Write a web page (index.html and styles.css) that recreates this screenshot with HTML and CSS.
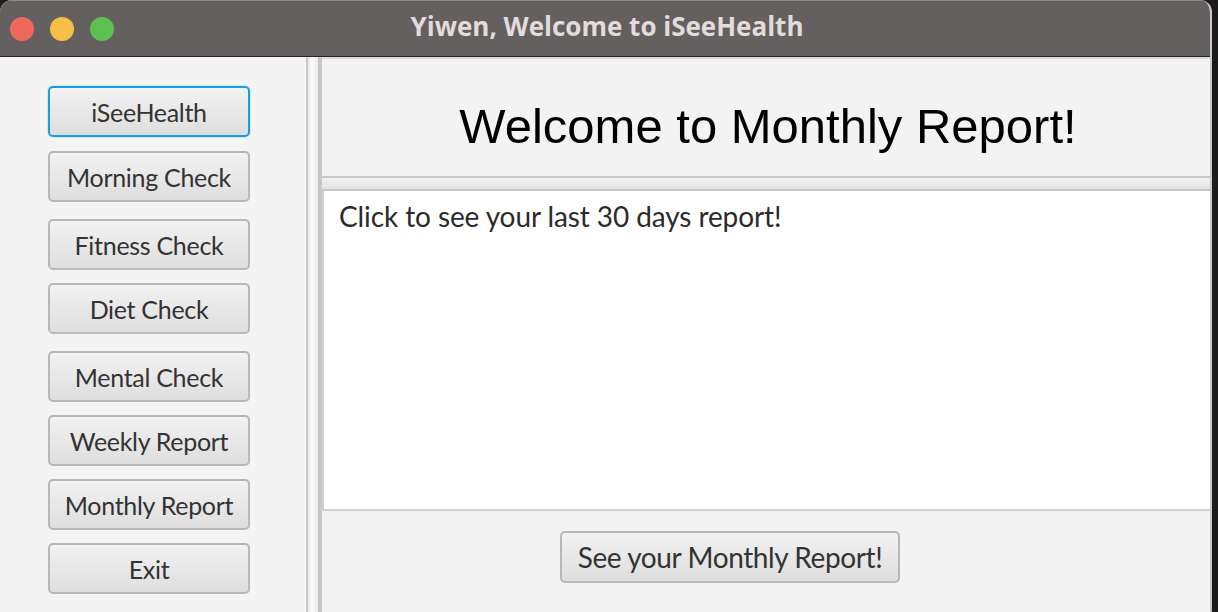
FILE: index.html
```html
<!DOCTYPE html>
<html>
<head>
<meta charset="utf-8">
<link rel="stylesheet" href="styles.css">
</head>
<body>
<div class="window">
  <div class="titlebar">
    <div class="lights">
      <span class="light red"></span>
      <span class="light yellow"></span>
      <span class="light green"></span>
    </div>
    <div class="title">Yiwen, Welcome to iSeeHealth</div>
  </div>
  <div class="content">
    <div class="sidebar">
      <button class="btn nav focused b1">iSeeHealth</button>
      <button class="btn nav b2">Morning Check</button>
      <button class="btn nav b3">Fitness Check</button>
      <button class="btn nav b4">Diet Check</button>
      <button class="btn nav b5">Mental Check</button>
      <button class="btn nav b6">Weekly Report</button>
      <button class="btn nav b7">Monthly Report</button>
      <button class="btn nav b8">Exit</button>
    </div>
    <div class="vsplit"></div>
    <div class="main">
      <div class="header">
        <h1 class="heading">Welcome to Monthly Report!</h1>
      </div>
      <div class="hsplit"></div>
      <div class="textarea">Click to see your last 30 days report!</div>
      <div class="footer">
        <button class="btn action">See your Monthly Report!</button>
      </div>
    </div>
  </div>
</div>
</body>
</html>
```

FILE: styles.css
```css
* { box-sizing: border-box; }
html, body { margin: 0; padding: 0; }
body {
  width: 1218px;
  height: 612px;
  background: #1c1c1c;
  overflow: hidden;
}
.window {
  width: 1212px;
  height: 622px;
  border-radius: 12px;
  overflow: hidden;
  background: #f4f4f4;
  display: flex;
  flex-direction: column;
  border-right: 2px solid #c9c9c9;
}
.titlebar {
  height: 57px;
  flex: none;
  background: #656060;
  border-top: 1px solid #8d8888;
  border-bottom: 1px solid #262424;
  display: flex;
  align-items: center;
  position: relative;
}
.lights {
  display: flex;
  gap: 16px;
  padding-left: 10px;
}
.light {
  width: 24px;
  height: 24px;
  border-radius: 50%;
  display: block;
}
.red { background: #f0685d; }
.yellow { background: #f6bd47; }
.green { background: #5cc052; }
.title {
  position: absolute;
  left: 0;
  right: 0;
  top: 9px;
  text-align: center;
  font-family: "Open Sans", "Liberation Sans", sans-serif;
  font-weight: 700;
  font-size: 26px;
  line-height: 32px;
  color: #e2dcdc;
  padding-left: 4px;
}
.content {
  flex: 1;
  display: flex;
}
.sidebar {
  width: 306px;
  flex: none;
  background: #f4f4f4;
  display: flex;
  flex-direction: column;
  align-items: flex-start;
  padding-left: 48px;
  padding-top: 29px;
}
.btn {
  font-family: Lato, "Open Sans", sans-serif;
  color: #333;
  border: 2px solid #b8b8b8;
  border-radius: 5px;
  background: linear-gradient(#f2f2f2, #dedede);
  padding: 0;
  margin: 0;
  cursor: default;
}
.nav {
  width: 202px;
  height: 51px;
  font-size: 25px;
  letter-spacing: -0.3px;
}
.focused {
  border-color: #1a9fdb;
  box-shadow: 0 0 0 1px #cfe8f4;
}
.b2 { margin-top: 14px; }
.b3 { margin-top: 17px; }
.b4 { margin-top: 13px; }
.b5 { margin-top: 17px; }
.b6 { margin-top: 13px; }
.b7 { margin-top: 13px; }
.b8 { margin-top: 13px; }
.vsplit {
  width: 16px;
  flex: none;
  border-left: 2px solid #c8c8c8;
  border-right: 4px solid #c8c8c8;
  background: linear-gradient(to right, #e6e6e6, #fbfbfb 40%, #ececec);
}
.main {
  flex: 1;
  display: flex;
  flex-direction: column;
  background: #f3f3f3;
}
.header {
  height: 121px;
  flex: none;
  display: flex;
  align-items: center;
  justify-content: center;
  border-top: 2px solid #dadada;
  border-bottom: 2px solid #c8c8c8;
}
.heading {
  margin: 0;
  font-family: "Liberation Sans", Arial, sans-serif;
  font-weight: normal;
  font-size: 49px;
  color: #000;
  padding-left: 4px;
  padding-top: 16px;
}
.hsplit {
  height: 13px;
  flex: none;
  background: linear-gradient(#f2f2f2, #e2e2e2);
  border-bottom: 2px solid #c6c6c6;
}
.textarea {
  height: 320px;
  flex: none;
  background: #fff;
  border-left: 2px solid #cfcfcf;
  border-bottom: 2px solid #d0d0d0;
  font-family: Lato, "Open Sans", sans-serif;
  font-size: 28px;
  letter-spacing: -0.1px;
  color: #2b2b2b;
  padding: 8px 15px;
}
.footer {
  flex: 1;
  display: flex;
  justify-content: center;
  align-items: flex-start;
  padding-top: 20px;
  padding-right: 72px;
}
.action {
  width: 340px;
  height: 52px;
  font-size: 28px;
  letter-spacing: -0.4px;
}
```
